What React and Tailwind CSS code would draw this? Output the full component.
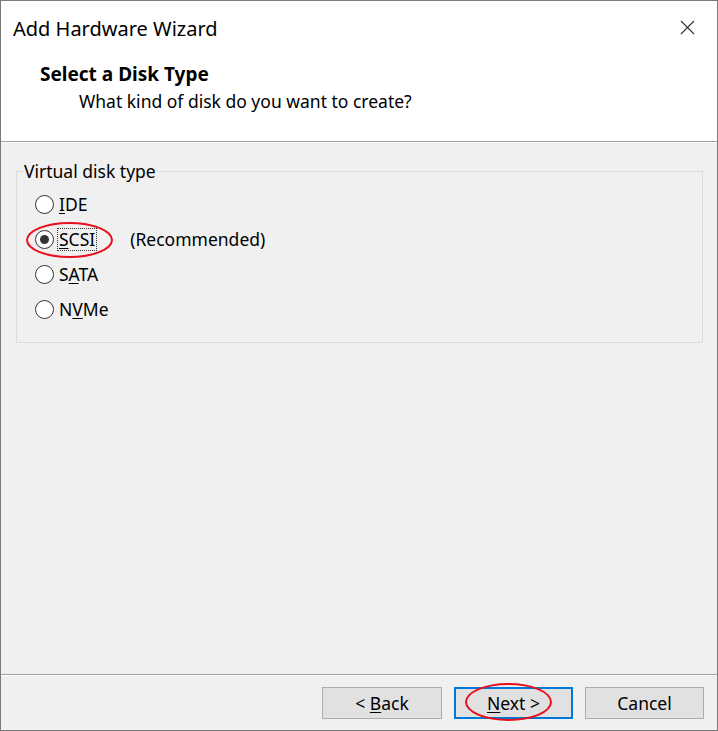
import React from "react";

const Radio = ({ checked }) => (
    <span className="w-[19px] h-[19px] rounded-full border border-[#333333] bg-white flex items-center justify-center shrink-0">
        {checked && <span className="w-[9px] h-[9px] rounded-full bg-[#333333]" />}
    </span>
);

const Accel = ({ text, at = 0 }) => (
    <>
        {text.slice(0, at)}
        <span className="underline underline-offset-2">{text[at]}</span>
        {text.slice(at + 1)}
    </>
);

const App = () => {
    const options = [
        { label: "IDE", at: 0 },
        { label: "SCSI", at: 0, checked: true },
        { label: "SATA", at: 1 },
        { label: "NVMe", at: 1 },
    ];

    return (
        <div className="w-[718px] h-[731px] border border-[#7a7a7a] bg-[#f0f0f0] flex flex-col font-['Noto_Sans',sans-serif] text-[17.5px] text-black">
            <div className="h-[141px] bg-white border-b border-[#a0a0a0] relative shrink-0">
                <div className="pt-[14px] pl-[12px] text-[20px] leading-[28px]">Add Hardware Wizard</div>
                <svg className="absolute right-[22px] top-[19px]" width="15" height="15" viewBox="0 0 15 15">
                    <path d="M1 1L14 14M14 1L1 14" stroke="#333" strokeWidth="1.1" fill="none" />
                </svg>
                <div className="mt-[19px] pl-[39px] font-bold text-[19px] leading-[24px]">Select a Disk Type</div>
                <div className="mt-[3px] pl-[78px] leading-[24px]">What kind of disk do you want to create?</div>
            </div>
            <div className="flex-1 border-t border-white px-[15px] pt-[17px] pr-[14px]">
                <fieldset className="border border-[#dcdcdc] px-[6px] pb-[15px]">
                    <legend className="px-[1px] leading-[22px]">Virtual disk type</legend>
                    <div className="pt-[5px]">
                        {options.map(opt => (
                            <div key={opt.label} className="h-[35px] flex items-center pl-[12px] relative">
                                <Radio checked={opt.checked} />
                                <span className={`ml-[4px] px-[1px] leading-[21px] ${opt.checked ? "outline outline-1 outline-dotted outline-[#333]" : ""}`}>
                                    <Accel text={opt.label} at={opt.at} />
                                </span>
                                {opt.checked && (
                                    <>
                                        <span className="ml-[34px]">(Recommended)</span>
                                        <span className="absolute left-[3px] top-[0px] w-[87px] h-[36px] border-2 border-[#e8101a] rounded-[50%] pointer-events-none" />
                                    </>
                                )}
                            </div>
                        ))}
                    </div>
                </fieldset>
            </div>
            <div className="h-[56px] shrink-0 border-t border-[#a0a0a0] flex justify-end items-start pt-[12px] pr-[13px] gap-[12px] shadow-[inset_0_1px_0_#ffffff]">
                <button className="w-[120px] h-[32px] bg-[#e1e1e1] border border-[#adadad]">
                    &lt; <Accel text="Back" at={0} />
                </button>
                <button className="w-[119px] h-[32px] bg-[#e1e1e1] border-2 border-[#0078d7] relative">
                    <Accel text="Next" at={0} /> &gt;
                    <span className="absolute left-[9px] top-[-6px] w-[87px] h-[38px] border-2 border-[#e8101a] rounded-[50%] pointer-events-none" />
                </button>
                <button className="w-[119px] h-[32px] bg-[#e1e1e1] border border-[#adadad]">Cancel</button>
            </div>
        </div>
    );
};

export default App;
